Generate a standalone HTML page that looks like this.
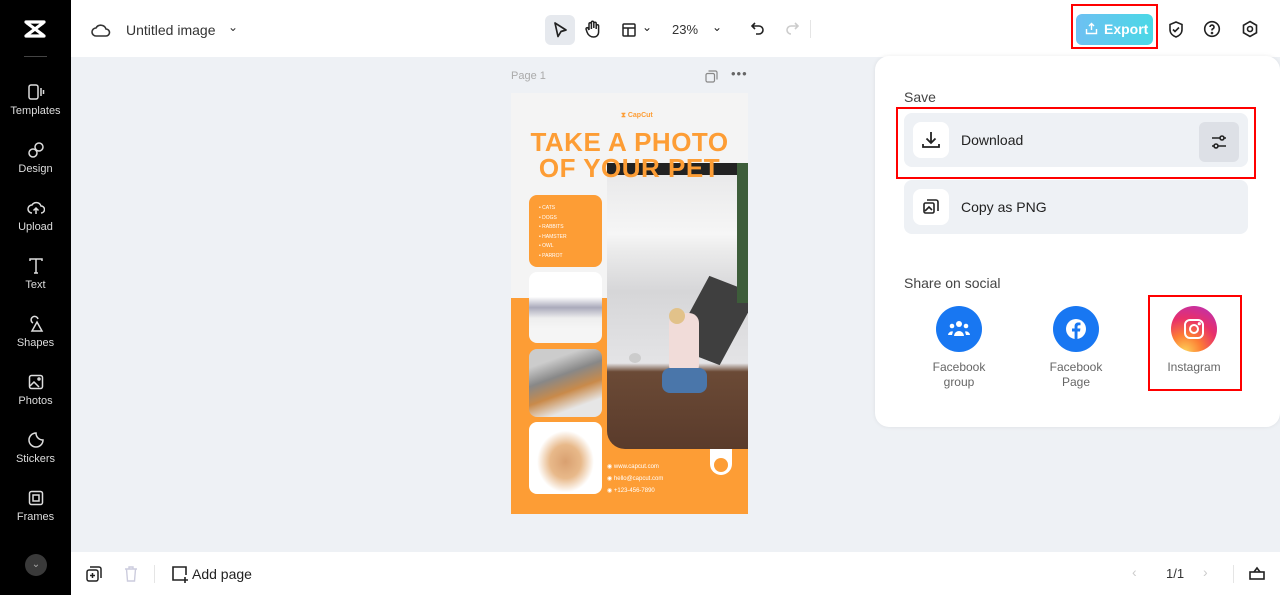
<!DOCTYPE html>
<html><head><meta charset="utf-8"><style>
*{box-sizing:border-box;margin:0;padding:0}
body{width:1280px;height:601px;overflow:hidden;background:#fff;font-family:"Liberation Sans",sans-serif;position:relative;color:#222}
.abs{position:absolute}
#side{left:0;top:0;width:71px;height:595px;background:#000}
.si{position:absolute;left:0;width:71px;text-align:center;color:#ddd;font-size:11px}
.si svg{display:block;margin:0 auto 4px}
#top{left:71px;top:0;width:1209px;height:57px;background:#fff}
#canvas{left:71px;top:57px;width:1209px;height:495px;background:#eef1f5}
#bot{left:71px;top:552px;width:1209px;height:43px;background:#fff}
.poster{left:511px;top:93px;width:237px;height:421px;background:#f4f4f4;overflow:hidden}
.org{background:#fd9d35}
#panel{left:875px;top:56px;width:405px;height:371px;background:#fff;border-radius:14px;box-shadow:0 0 4px rgba(0,0,0,.08)}
.row{position:absolute;left:29px;width:344px;height:54px;background:#eef1f5;border-radius:8px}
.ib{position:absolute;left:9px;top:9px;width:36px;height:36px;background:#fff;border-radius:8px}
.red{position:absolute;border:2px solid #f00}
.soc{position:absolute;top:250px;width:46px;height:46px;border-radius:50%}
.lbl{position:absolute;font-size:12px;color:#666;text-align:center;width:90px;line-height:15px}
</style></head><body>
<div id="side" class="abs">
 <svg class="abs" style="left:23px;top:19px" width="24" height="20" viewBox="0 0 24 20"><path d="M3 3h18M3 17h18M4 4l16 12M20 4L4 16" stroke="#fff" stroke-width="3.2" fill="none" stroke-linecap="round"/></svg>
 <div class="abs" style="left:24px;top:56px;width:23px;height:1px;background:#444"></div>
 <div class="si" style="top:83px"><svg width="18" height="18" viewBox="0 0 18 18" fill="none" stroke="#ddd" stroke-width="1.5"><rect x="2" y="2" width="9" height="14" rx="2"/><path d="M14 5v8M16.5 7v4"/></svg>Templates</div>
 <div class="si" style="top:141px"><svg width="18" height="18" viewBox="0 0 18 18" fill="none" stroke="#ddd" stroke-width="1.5"><circle cx="6" cy="12" r="4"/><circle cx="12" cy="6" r="4"/></svg>Design</div>
 <div class="si" style="top:199px"><svg width="18" height="18" viewBox="0 0 18 18" fill="none" stroke="#ddd" stroke-width="1.5"><path d="M5 14a4 4 0 0 1 0-8 5 5 0 0 1 9 1 3.5 3.5 0 0 1 0 7M9 15V9M6.5 11.5L9 9l2.5 2.5"/></svg>Upload</div>
 <div class="si" style="top:257px"><svg width="18" height="18" viewBox="0 0 18 18" fill="none" stroke="#ddd" stroke-width="1.5"><path d="M3 4V2h12v2M9 2v14M7 16h4"/></svg>Text</div>
 <div class="si" style="top:315px"><svg width="18" height="18" viewBox="0 0 18 18" fill="none" stroke="#ddd" stroke-width="1.5"><path d="M6 8a3.5 3.5 0 1 1 5-4M10 7l5 9H5z"/></svg>Shapes</div>
 <div class="si" style="top:373px"><svg width="18" height="18" viewBox="0 0 18 18" fill="none" stroke="#ddd" stroke-width="1.5"><rect x="2.5" y="2.5" width="13" height="13" rx="2"/><path d="M3 13l4-4 5 5"/><circle cx="12" cy="6" r="1"/></svg>Photos</div>
 <div class="si" style="top:431px"><svg width="18" height="18" viewBox="0 0 18 18" fill="none" stroke="#ddd" stroke-width="1.5"><path d="M9 2a7 7 0 1 0 7 7c-4 0-7-3-7-7z"/></svg>Stickers</div>
 <div class="si" style="top:489px"><svg width="18" height="18" viewBox="0 0 18 18" fill="none" stroke="#ddd" stroke-width="1.5"><rect x="2.5" y="2.5" width="13" height="13" rx="2"/><rect x="6" y="6" width="6" height="6"/></svg>Frames</div>
 <div class="abs" style="left:25px;top:554px;width:22px;height:22px;border-radius:50%;background:#3a3a3a;color:#aaa;font-size:10px;text-align:center;line-height:22px">⌄</div>
 <div class="abs" style="left:71px;top:277px;width:6px;height:48px;background:#222;border-radius:0 6px 6px 0"></div>
</div>
<div id="top" class="abs">
 <svg class="abs" style="left:20px;top:21px" width="20" height="18" viewBox="0 0 20 18" fill="none" stroke="#333" stroke-width="1.6"><path d="M5 15a4 4 0 0 1 0-8 5.5 5.5 0 0 1 10 1 3.5 3.5 0 0 1 0 7z"/></svg>
 <div class="abs" style="left:55px;top:22px;font-size:14px;color:#333">Untitled image</div>
 <div class="abs" style="left:157px;top:20px;font-size:12px;color:#333">⌄</div>
 <div class="abs" style="left:474px;top:15px;width:30px;height:30px;background:#e6e9ee;border-radius:6px"></div>
 <svg class="abs" style="left:481px;top:21px" width="16" height="18" viewBox="0 0 16 18" fill="none" stroke="#222" stroke-width="1.7"><path d="M3 2l11 7-5 1.5-3 5z" stroke-linejoin="round"/></svg>
 <svg class="abs" style="left:513px;top:20px" width="18" height="19" viewBox="0 0 18 19" fill="none" stroke="#222" stroke-width="1.5"><path d="M5 10V4a1.2 1.2 0 0 1 2.4 0v5M7.4 8V2.5a1.2 1.2 0 0 1 2.4 0V8M9.8 8V3.5a1.2 1.2 0 0 1 2.4 0V9M12.2 9V6a1.2 1.2 0 0 1 2.4 0v6c0 3-2 5-5 5S4 15 3 12l-1-3a1.2 1.2 0 0 1 2-1l1 2"/></svg>
 <svg class="abs" style="left:550px;top:22px" width="16" height="16" viewBox="0 0 16 16" fill="none" stroke="#222" stroke-width="1.5"><rect x="2" y="2" width="12" height="12" rx="1"/><path d="M2 6h12M7 6v8"/></svg>
 <div class="abs" style="left:571px;top:20px;font-size:12px">⌄</div>
 <div class="abs" style="left:601px;top:22px;font-size:13px;color:#333">23%</div>
 <div class="abs" style="left:641px;top:20px;font-size:12px">⌄</div>
 <div class="abs" style="left:739px;top:20px;width:1px;height:18px;background:#e5e5e5"></div>
 <svg class="abs" style="left:679px;top:21px" width="16" height="16" viewBox="0 0 16 16" fill="none" stroke="#222" stroke-width="1.6"><path d="M5 2L2 5l3 3M2 5h7a4 4 0 0 1 0 8H6"/></svg>
 <svg class="abs" style="left:713px;top:21px" width="16" height="16" viewBox="0 0 16 16" fill="none" stroke="#ccc" stroke-width="1.6"><path d="M11 2l3 3-3 3M14 5H7a4 4 0 0 0 0 8"/></svg>
 <div class="abs" style="left:1005px;top:14px;width:77px;height:31px;border-radius:6px;background:linear-gradient(90deg,#6ec0f2,#4ad8e6);color:#fff;font-weight:bold;font-size:14px;line-height:31px;padding-left:28px">Export</div>
 <svg class="abs" style="left:1014px;top:22px" width="13" height="13" viewBox="0 0 13 13" fill="none" stroke="#fff" stroke-width="1.4"><path d="M6.5 8V1.5M4 4l2.5-2.5L9 4M1.5 7v4.5h10V7"/></svg>
 <div class="red" style="left:1000px;top:4px;width:87px;height:45px"></div>
 <svg class="abs" style="left:1096px;top:20px" width="18" height="19" viewBox="0 0 18 19" fill="none" stroke="#222" stroke-width="1.6"><path d="M9 2l6 2.5v5c0 4-3 6.5-6 7.5-3-1-6-3.5-6-7.5v-5z"/><path d="M6 9.5l2 2 4-4"/></svg>
 <svg class="abs" style="left:1132px;top:20px" width="18" height="18" viewBox="0 0 18 18" fill="none" stroke="#222" stroke-width="1.6"><circle cx="9" cy="9" r="7.3"/><path d="M7 7a2 2 0 1 1 2.5 2c-.5.2-.5.7-.5 1.5"/><circle cx="9" cy="13" r=".5"/></svg>
 <svg class="abs" style="left:1170px;top:20px" width="18" height="18" viewBox="0 0 18 18" fill="none" stroke="#222" stroke-width="1.6"><path d="M9 1.5l6.5 3.75v7.5L9 16.5l-6.5-3.75v-7.5z"/><circle cx="9" cy="9" r="2.5"/></svg>
</div>
<div id="canvas" class="abs">
 <div class="abs" style="left:440px;top:13px;font-size:11px;color:#aaa">Page 1</div>
 <svg class="abs" style="left:634px;top:13px" width="13" height="13" viewBox="0 0 13 13" fill="none" stroke="#888" stroke-width="1.2"><rect x="1" y="3.5" width="8.5" height="8.5" rx="1.5"/><path d="M3.5 1h7a1.5 1.5 0 0 1 1.5 1.5v7"/></svg>
 <div class="abs" style="left:660px;top:9px;font-size:13px;color:#666;letter-spacing:1px">•••</div>
</div>
<div class="abs poster">
 <div class="abs org" style="left:0;top:205px;width:237px;height:216px"></div>
 <div class="abs" style="left:110px;top:19px;font-size:7px;color:#fd9d35;font-weight:bold">⧗ CapCut</div>
 <div class="abs" style="left:0;top:36px;width:237px;text-align:center;font-weight:bold;font-size:26px;line-height:26px;color:#fd9d35;z-index:2;letter-spacing:0.5px">TAKE A PHOTO<br>OF YOUR PET</div>
 <div class="abs" style="left:96px;top:70px;width:141px;height:286px;border-radius:0 0 0 18px;background:linear-gradient(180deg,#222 0,#222 12px,#e9e9ea 12px,#f6f6f6 25%,#ececec 30%,#d6d6d8 45%,#e4e4e6 70%,#6b4a36 73%,#5a3b2b 100%);overflow:hidden">
  <div class="abs" style="left:80px;top:120px;width:55px;height:75px;background:#3f3f3f;transform:skew(-10deg) rotate(20deg)"></div>
  <div class="abs" style="left:62px;top:150px;width:30px;height:62px;background:#f1dcd9;border-radius:10px"></div>
  <div class="abs" style="left:62px;top:145px;width:16px;height:16px;background:#e2c28a;border-radius:50%"></div>
  <div class="abs" style="left:55px;top:205px;width:45px;height:25px;background:#4a76aa;border-radius:8px"></div>
  <div class="abs" style="left:22px;top:190px;width:12px;height:10px;background:#ccc;border-radius:50%"></div>
  <div class="abs" style="left:130px;top:0;width:11px;height:140px;background:#3d5d3a"></div>
 </div>
 <div class="abs org" style="left:18px;top:102px;width:73px;height:72px;border-radius:8px;color:#fff;font-size:5px;line-height:9.5px;padding:9px 0 0 10px">• CATS<br>• DOGS<br>• RABBITS<br>• HAMSTER<br>• OWL<br>• PARROT</div>
 <div class="abs" style="left:18px;top:179px;width:73px;height:71px;border-radius:8px;background:linear-gradient(180deg,#fff 35%,#aab 50%,#eee 65%,#f5f5f5 80%)"></div>
 <div class="abs" style="left:18px;top:256px;width:73px;height:68px;border-radius:8px;background:linear-gradient(160deg,#ccc 20%,#888 40%,#c98a4a 60%,#e6e6e6 80%)"></div>
 <div class="abs" style="left:18px;top:329px;width:73px;height:72px;border-radius:8px;background:radial-gradient(ellipse at 50% 55%,#d9a070 0,#e8b98a 30%,#fff 55%)"></div>
 <div class="abs" style="left:96px;top:368px;font-size:6px;color:#fff;line-height:12px">◉ www.capcut.com<br>◉ hello@capcut.com<br>◉ +123-456-7890</div>
 <div class="abs" style="left:199px;top:356px;width:22px;height:26px;background:#fff;border-radius:0 0 11px 11px"></div>
 <div class="abs org" style="left:203px;top:365px;width:14px;height:14px;border-radius:50%"></div>
</div>
<div id="panel" class="abs">
 <div class="abs" style="left:29px;top:33px;font-size:14px;color:#444">Save</div>
 <div class="row" style="top:57px"><div class="ib"></div>
  <svg class="abs" style="left:17px;top:17px" width="20" height="20" viewBox="0 0 20 20" fill="none" stroke="#222" stroke-width="1.8"><path d="M10 2v11M5.5 8.5L10 13l4.5-4.5M2 14v3h16v-3"/></svg>
  <div class="abs" style="left:57px;top:19px;font-size:14px">Download</div>
  <div class="abs" style="left:295px;top:9px;width:40px;height:40px;background:#dde0e6;border-radius:6px"></div>
  <svg class="abs" style="left:305px;top:19px" width="20" height="20" viewBox="0 0 20 20" fill="none" stroke="#222" stroke-width="1.6"><path d="M3 6h14M3 14h14"/><circle cx="13" cy="6" r="2" fill="#dde0e6"/><circle cx="7" cy="14" r="2" fill="#dde0e6"/></svg>
 </div>
 <div class="red" style="left:21px;top:51px;width:360px;height:72px"></div>
 <div class="row" style="top:124px"><div class="ib"></div>
  <svg class="abs" style="left:18px;top:18px" width="18" height="18" viewBox="0 0 18 18" fill="none" stroke="#222" stroke-width="1.6"><rect x="2" y="5" width="10" height="10" rx="1.5"/><path d="M5 2h9a2 2 0 0 1 2 2v9M3 13l4-4 3 3"/></svg>
  <div class="abs" style="left:57px;top:19px;font-size:14px">Copy as PNG</div>
 </div>
 <div class="abs" style="left:29px;top:219px;font-size:14px;color:#444">Share on social</div>
 <div class="soc" style="left:61px;background:#1877f2"></div>
 <svg class="abs" style="left:73px;top:264px" width="22" height="18" viewBox="0 0 22 18" fill="#fff"><circle cx="11" cy="4" r="3"/><circle cx="4" cy="6" r="2.3"/><circle cx="18" cy="6" r="2.3"/><path d="M6 16a5 5 0 0 1 10 0zM0 15a4 4 0 0 1 5-3.5L4 15zM22 15a4 4 0 0 0-5-3.5L18 15z"/></svg>
 <div class="lbl" style="left:39px;top:304px">Facebook<br>group</div>
 <div class="soc" style="left:178px;background:#1877f2"></div>
 <svg class="abs" style="left:190px;top:262px" width="22" height="22" viewBox="0 0 22 22"><circle cx="11" cy="11" r="10" fill="#fff"/><path d="M12.5 21v-7.5h2.5l.4-3h-2.9V8.7c0-.8.3-1.4 1.5-1.4h1.5V4.6c-.3 0-1.2-.1-2.2-.1-2.2 0-3.7 1.3-3.7 3.8v2.2H7v3h2.6V21z" fill="#1877f2"/></svg>
 <div class="lbl" style="left:156px;top:304px">Facebook<br>Page</div>
 <div class="soc" style="left:296px;background:radial-gradient(circle at 30% 100%,#fdd35a 0,#fd7e34 30%,#e8306a 60%,#b22fc2 100%)"></div>
 <svg class="abs" style="left:308px;top:262px" width="22" height="22" viewBox="0 0 22 22" fill="none" stroke="#fff" stroke-width="2"><rect x="2" y="2" width="18" height="18" rx="5"/><circle cx="11" cy="11" r="4"/><circle cx="16.3" cy="5.7" r=".6" fill="#fff"/></svg>
 <div class="lbl" style="left:274px;top:304px">Instagram</div>
 <div class="red" style="left:273px;top:239px;width:94px;height:96px"></div>
</div>
<div id="bot" class="abs">
 <svg class="abs" style="left:15px;top:14px" width="16" height="16" viewBox="0 0 16 16" fill="none" stroke="#222" stroke-width="1.5"><rect x="1" y="4" width="11" height="11" rx="2"/><path d="M4 1h9a2 2 0 0 1 2 2v9M6.5 7v5M4 9.5h5"/></svg>
 <svg class="abs" style="left:53px;top:14px" width="14" height="16" viewBox="0 0 14 16" fill="none" stroke="#ccd" stroke-width="1.4"><path d="M1 3h12M5 3V1h4v2M2.5 3l1 12h7l1-12"/></svg>
 <div class="abs" style="left:83px;top:13px;width:1px;height:18px;background:#e5e5e5"></div>
 <svg class="abs" style="left:100px;top:13px" width="18" height="18" viewBox="0 0 18 18" fill="none" stroke="#222" stroke-width="1.6"><path d="M11 15H2V2h13v8M14 12v6M11 15h6"/></svg>
 <div class="abs" style="left:121px;top:14px;font-size:14px;color:#222">Add page</div>
 <div class="abs" style="left:1061px;top:12px;font-size:14px;color:#ccc">‹</div>
 <div class="abs" style="left:1095px;top:14px;font-size:13px;color:#333">1/1</div>
 <div class="abs" style="left:1132px;top:12px;font-size:14px;color:#ccc">›</div>
 <div class="abs" style="left:1162px;top:13px;width:1px;height:18px;background:#e5e5e5"></div>
 <svg class="abs" style="left:1177px;top:13px" width="18" height="16" viewBox="0 0 18 16" fill="none" stroke="#222" stroke-width="1.6"><rect x="2" y="7" width="14" height="7"/><path d="M6 7l3-4 3 4"/></svg>
</div>
</body></html>
